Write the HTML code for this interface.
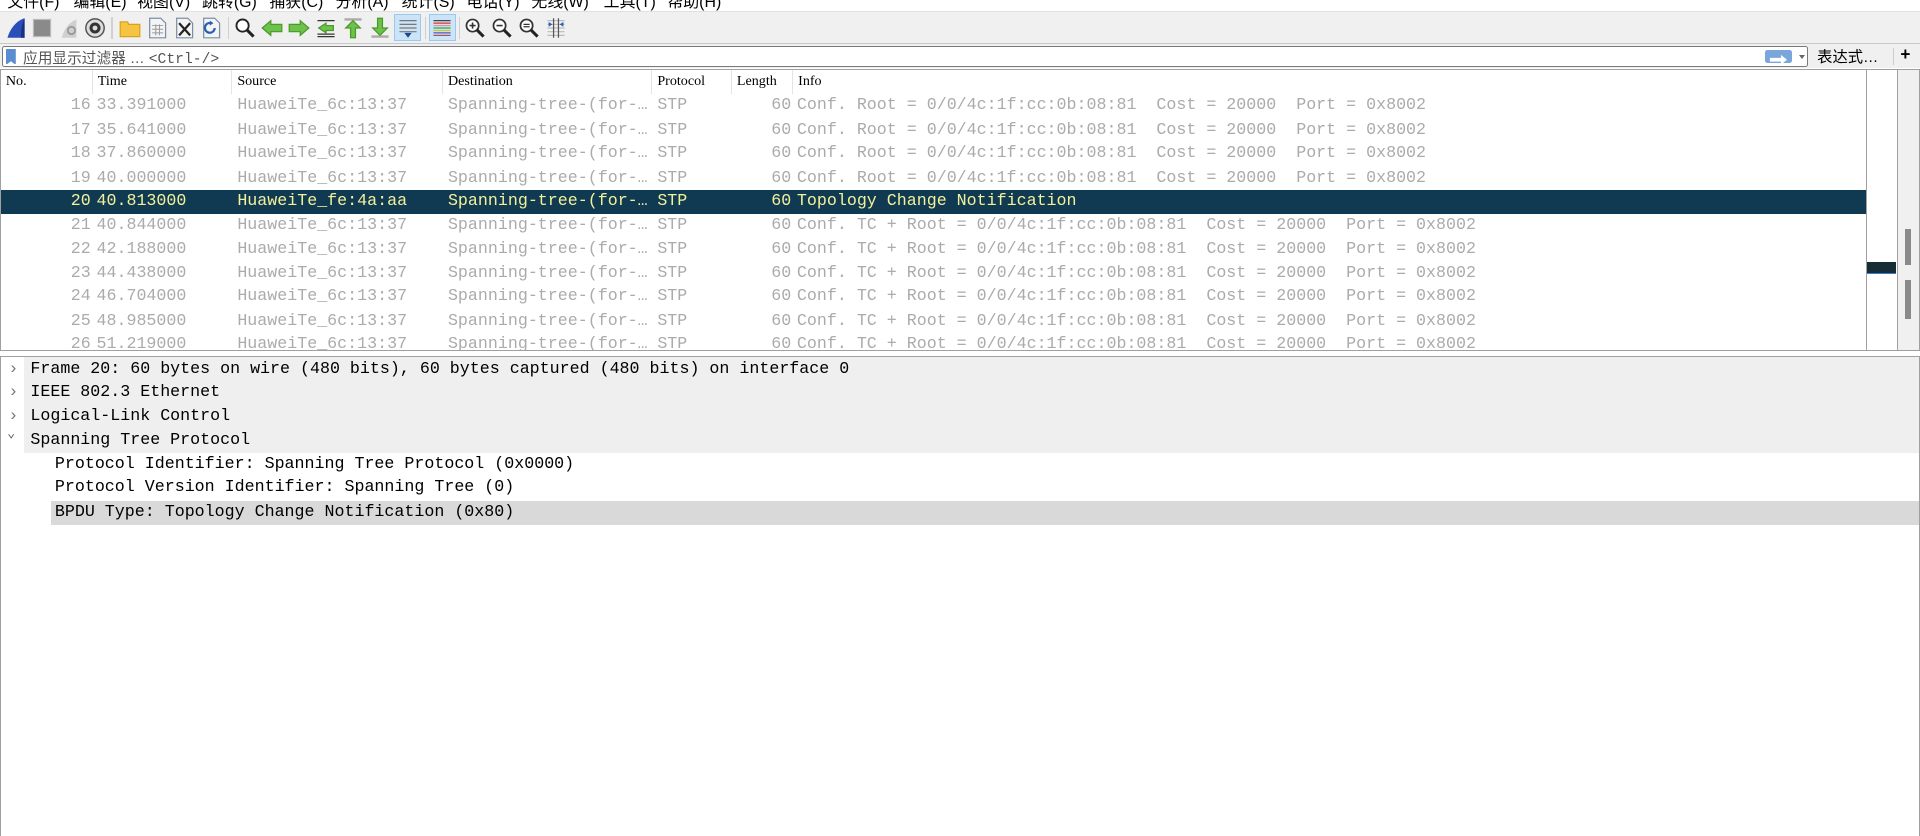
<!DOCTYPE html>
<html><head><meta charset="utf-8">
<style>
html,body{margin:0;padding:0;background:#fff;overflow:hidden;width:1920px;height:836px}
#w{position:relative;width:1568px;height:683px;zoom:1.22449;overflow:hidden;background:#fff;font-family:"Liberation Sans","Noto Sans CJK SC",sans-serif}
.abs{position:absolute}
.menu{top:-9px;left:0;height:18px;font-size:13px;color:#000;white-space:nowrap}
.menu span{position:absolute;top:0}
.tb{top:9px;left:0;width:1568px;height:26px;background:#f0f0f0;border-top:1px solid #e0e0e0}
.ic{position:absolute;top:4px;width:18px;height:18px}
.sep{position:absolute;top:4px;width:1px;height:18px;background:#d0d0d0}
.fb{top:35px;left:0;width:1568px;height:20px;background:#f0f0f0;border-top:1px solid #c8c8c8}
.inp{position:absolute;left:2px;top:2px;width:1473px;height:15px;background:#fff;border:1px solid #7a7a7a;border-radius:2px}
.mono{font-family:"Liberation Mono","DejaVu Sans Mono",monospace}
.pl{top:56px;left:0;width:1566px;height:229px;border:1px solid #a0a0a0;background:#fff;overflow:hidden}
.hdr{position:absolute;top:0;left:0;width:1523px;height:20px;font-size:11.5px;font-family:"Liberation Serif","DejaVu Serif",serif;color:#000}
.hdr span{position:absolute;top:3px}
.hdr i{position:absolute;top:0;width:1px;height:20px;background:#e4e4e4}
.row{position:absolute;left:0;width:1523px;height:20px;font-size:13.6px;color:#ababab;white-space:pre}
.row span{position:absolute;top:1px}
.sel{background:#0f3a52;color:#f4f19c}
.dp{top:291px;left:0;width:1566px;height:392px;border:1px solid #a0a0a0;border-bottom:none;background:#fff}
.dr{position:absolute;height:20px;font-size:13.6px;color:#000;white-space:pre}
.dr span{position:absolute;top:1px}
</style></head><body><div id="w">
<div class="abs menu">
<span style="left:6px">文件(F)</span><span style="left:60px">编辑(E)</span><span style="left:112px">视图(V)</span><span style="left:165px">跳转(G)</span><span style="left:220px">捕获(C)</span><span style="left:274px">分析(A)</span><span style="left:328px">统计(S)</span><span style="left:381px">电话(Y)</span><span style="left:434px">无线(W)</span><span style="left:493px">工具(T)</span><span style="left:545px">帮助(H)</span>
</div>
<div class="abs tb">
<svg class="ic" style="left:4px" viewBox="0 0 18 18"><path d="M2 17 C4 10 9 3 16 1 L16 17 Z" fill="#2a4fb8"/><path d="M16 1 L16 17 L13 17 C13 10 14 5 16 1Z" fill="#1a2f80"/></svg>
<svg class="ic" style="left:25px" viewBox="0 0 18 18"><rect x="2" y="2" width="14" height="14" fill="#8a8a8a" stroke="#bbb"/></svg>
<svg class="ic" style="left:47px" viewBox="0 0 18 18"><path d="M3 17 C5 10 9 4 15 2 L15 17 Z" fill="#cfcfcf"/><circle cx="11" cy="11" r="3" fill="none" stroke="#999" stroke-width="1.5"/></svg>
<svg class="ic" style="left:69px" viewBox="0 0 18 18"><circle cx="9" cy="9" r="7.5" fill="#ddd" stroke="#555" stroke-width="1.2"/><circle cx="9" cy="9" r="4.5" fill="#333"/><circle cx="9" cy="9" r="2" fill="#ddd"/></svg>
<div class="sep" style="left:91px"></div>
<svg class="ic" style="left:97px" viewBox="0 0 18 18"><path d="M1 4 H7 L8 6 H17 V16 H1Z" fill="#f6c440" stroke="#d9a21c"/></svg>
<svg class="ic" style="left:119px" viewBox="0 0 18 18"><path d="M3 1 H12 L16 5 V17 H3Z" fill="#f4f4f4" stroke="#7a8ea8"/><path d="M5 7H14M5 10H14M5 13H14M8 6V15M11 6V15" stroke="#999" stroke-width=".8"/></svg>
<svg class="ic" style="left:141px" viewBox="0 0 18 18"><path d="M3 1 H12 L16 5 V17 H3Z" fill="#f4f4f4" stroke="#7a8ea8"/><path d="M5 5 L14 15 M14 5 L5 15" stroke="#222" stroke-width="1.8"/></svg>
<svg class="ic" style="left:163px" viewBox="0 0 18 18"><path d="M3 1 H12 L16 5 V17 H3Z" fill="#f4f4f4" stroke="#7a8ea8"/><path d="M12 9 A4 4 0 1 1 9 5" fill="none" stroke="#2a5fb8" stroke-width="1.8"/><path d="M8 3 L11 5 L8 7Z" fill="#2a5fb8"/></svg>
<div class="sep" style="left:186px"></div>
<svg class="ic" style="left:191px" viewBox="0 0 18 18"><circle cx="7" cy="7" r="5" fill="#fff" stroke="#222" stroke-width="1.5"/><path d="M10.5 10.5 L16 16" stroke="#222" stroke-width="2.5"/></svg>
<svg class="ic" style="left:213px" viewBox="0 0 18 18"><path d="M1 9 L8 3 V6 H17 V12 H8 V15Z" fill="#6cc24a" stroke="#4a9a2a"/></svg>
<svg class="ic" style="left:235px" viewBox="0 0 18 18"><path d="M17 9 L10 3 V6 H1 V12 H10 V15Z" fill="#6cc24a" stroke="#4a9a2a"/></svg>
<svg class="ic" style="left:257px" viewBox="0 0 18 18"><path d="M2 3H16M2 14H16M2 16H16" stroke="#333"/><path d="M3 9 L9 5 V7 H15 V11 H9 V13Z" fill="#6cc24a" stroke="#4a9a2a"/></svg>
<svg class="ic" style="left:279px" viewBox="0 0 18 18"><path d="M2 2H16" stroke="#aaa" stroke-width="2"/><path d="M9 3 L15 9 H11 V17 H7 V9 H3Z" fill="#6cc24a" stroke="#4a9a2a"/></svg>
<svg class="ic" style="left:301px" viewBox="0 0 18 18"><path d="M2 16H16" stroke="#aaa" stroke-width="2"/><path d="M9 15 L15 9 H11 V1 H7 V9 H3Z" fill="#6cc24a" stroke="#4a9a2a"/></svg>
<div class="ic" style="left:322px;top:2px;width:22px;height:22px;background:#cce4f7;border:1px solid #99c9ef;box-sizing:border-box"></div>
<svg class="ic" style="left:324px" viewBox="0 0 18 18"><path d="M2 3H16M2 6H16M2 9H16M2 12H16" stroke="#777"/><path d="M6 13H12L9 17Z" fill="#1a4a8a"/></svg>
<div class="sep" style="left:347px"></div>
<div class="ic" style="left:350px;top:2px;width:22px;height:22px;background:#cce4f7;border:1px solid #99c9ef;box-sizing:border-box"></div>
<svg class="ic" style="left:352px" viewBox="0 0 18 18"><path d="M2 3H16" stroke="#444"/><path d="M2 5H16" stroke="#d33"/><path d="M2 7H16" stroke="#e89"/><path d="M2 9H16" stroke="#3a3"/><path d="M2 11H16" stroke="#c9c93a"/><path d="M2 13H16" stroke="#55c"/><path d="M2 15H16" stroke="#a55"/></svg>
<div class="sep" style="left:375px"></div>
<svg class="ic" style="left:379px" viewBox="0 0 18 18"><circle cx="7" cy="7" r="5" fill="#fff" stroke="#333" stroke-width="1.4"/><path d="M4.5 7H9.5M7 4.5V9.5" stroke="#333" stroke-width="1.3"/><path d="M10.5 10.5 L16 16" stroke="#222" stroke-width="2.5"/></svg>
<svg class="ic" style="left:401px" viewBox="0 0 18 18"><circle cx="7" cy="7" r="5" fill="#fff" stroke="#333" stroke-width="1.4"/><path d="M4.5 7H9.5" stroke="#333" stroke-width="1.3"/><path d="M10.5 10.5 L16 16" stroke="#222" stroke-width="2.5"/></svg>
<svg class="ic" style="left:423px" viewBox="0 0 18 18"><circle cx="7" cy="7" r="5" fill="#fff" stroke="#333" stroke-width="1.4"/><path d="M4.5 6H9.5M4.5 8H9.5" stroke="#333" stroke-width="1"/><path d="M10.5 10.5 L16 16" stroke="#222" stroke-width="2.5"/></svg>
<svg class="ic" style="left:445px" viewBox="0 0 18 18"><path d="M2 3H16M2 6H16M2 9H16M2 12H16M2 15H16" stroke="#bbb"/><path d="M7 1V17M11 1V17" stroke="#555"/><path d="M3 4L6 6L3 8ZM15 4L12 6L15 8Z" fill="#2a5fb8"/></svg>
</div>
<div class="abs fb">
<div class="inp">
<svg style="position:absolute;left:2px;top:1px" width="8" height="13" viewBox="0 0 8 13"><path d="M0 0H8V13L4 10L0 13Z" fill="#5a8ed0"/></svg>
<span style="position:absolute;left:16px;top:0px;font-size:12px;color:#555;white-space:nowrap">应用显示过滤器 … <span class="mono" style="position:static">&lt;Ctrl-/&gt;</span></span>
<div style="position:absolute;left:1439px;top:2px;width:22px;height:11px;background:#7aa6dc;border-radius:2px"><svg width="22" height="11" viewBox="0 0 22 11"><path d="M4 4H13V1.5L18 5.5L13 9.5V7H4Z" fill="#fff"/></svg></div>
<div style="position:absolute;left:1466px;top:6px;width:0;height:0;border-left:3px solid transparent;border-right:3px solid transparent;border-top:4px solid #666"></div>
</div>
<span style="position:absolute;left:1484px;top:1px;font-size:12.5px;white-space:nowrap">表达式…</span>
<div style="position:absolute;left:1546px;top:3px;width:1px;height:14px;background:#ccc"></div>
<span style="position:absolute;left:1552px;top:0px;font-size:14px;font-weight:bold">+</span>
</div>
<div class="abs pl">
<div class="hdr">
<span style="left:4px">No.</span><i style="left:74px"></i>
<span style="left:79px">Time</span><i style="left:188px"></i>
<span style="left:193px">Source</span><i style="left:360px"></i>
<span style="left:365px">Destination</span><i style="left:531px"></i>
<span style="left:536px">Protocol</span><i style="left:596px"></i>
<span style="left:601px">Length</span><i style="left:646px"></i>
<span style="left:651px">Info</span>
</div>
<div class="row mono" style="top:20px"><span style="left:57px">16</span><span style="left:78px">33.391000</span><span style="left:193px">HuaweiTe_6c:13:37</span><span style="left:365px">Spanning-tree-(for-…</span><span style="left:536px">STP</span><span style="left:629px">60</span><span style="left:650px">Conf. Root = 0/0/4c:1f:cc:0b:08:81  Cost = 20000  Port = 0x8002</span></div>
<div class="row mono" style="top:40px"><span style="left:57px">17</span><span style="left:78px">35.641000</span><span style="left:193px">HuaweiTe_6c:13:37</span><span style="left:365px">Spanning-tree-(for-…</span><span style="left:536px">STP</span><span style="left:629px">60</span><span style="left:650px">Conf. Root = 0/0/4c:1f:cc:0b:08:81  Cost = 20000  Port = 0x8002</span></div>
<div class="row mono" style="top:59px"><span style="left:57px">18</span><span style="left:78px">37.860000</span><span style="left:193px">HuaweiTe_6c:13:37</span><span style="left:365px">Spanning-tree-(for-…</span><span style="left:536px">STP</span><span style="left:629px">60</span><span style="left:650px">Conf. Root = 0/0/4c:1f:cc:0b:08:81  Cost = 20000  Port = 0x8002</span></div>
<div class="row mono" style="top:79px"><span style="left:57px">19</span><span style="left:78px">40.000000</span><span style="left:193px">HuaweiTe_6c:13:37</span><span style="left:365px">Spanning-tree-(for-…</span><span style="left:536px">STP</span><span style="left:629px">60</span><span style="left:650px">Conf. Root = 0/0/4c:1f:cc:0b:08:81  Cost = 20000  Port = 0x8002</span></div>
<div class="row mono sel" style="top:98px"><span style="left:57px">20</span><span style="left:78px">40.813000</span><span style="left:193px">HuaweiTe_fe:4a:aa</span><span style="left:365px">Spanning-tree-(for-…</span><span style="left:536px">STP</span><span style="left:629px">60</span><span style="left:650px">Topology Change Notification</span></div>
<div class="row mono" style="top:118px"><span style="left:57px">21</span><span style="left:78px">40.844000</span><span style="left:193px">HuaweiTe_6c:13:37</span><span style="left:365px">Spanning-tree-(for-…</span><span style="left:536px">STP</span><span style="left:629px">60</span><span style="left:650px">Conf. TC + Root = 0/0/4c:1f:cc:0b:08:81  Cost = 20000  Port = 0x8002</span></div>
<div class="row mono" style="top:137px"><span style="left:57px">22</span><span style="left:78px">42.188000</span><span style="left:193px">HuaweiTe_6c:13:37</span><span style="left:365px">Spanning-tree-(for-…</span><span style="left:536px">STP</span><span style="left:629px">60</span><span style="left:650px">Conf. TC + Root = 0/0/4c:1f:cc:0b:08:81  Cost = 20000  Port = 0x8002</span></div>
<div class="row mono" style="top:157px"><span style="left:57px">23</span><span style="left:78px">44.438000</span><span style="left:193px">HuaweiTe_6c:13:37</span><span style="left:365px">Spanning-tree-(for-…</span><span style="left:536px">STP</span><span style="left:629px">60</span><span style="left:650px">Conf. TC + Root = 0/0/4c:1f:cc:0b:08:81  Cost = 20000  Port = 0x8002</span></div>
<div class="row mono" style="top:176px"><span style="left:57px">24</span><span style="left:78px">46.704000</span><span style="left:193px">HuaweiTe_6c:13:37</span><span style="left:365px">Spanning-tree-(for-…</span><span style="left:536px">STP</span><span style="left:629px">60</span><span style="left:650px">Conf. TC + Root = 0/0/4c:1f:cc:0b:08:81  Cost = 20000  Port = 0x8002</span></div>
<div class="row mono" style="top:196px"><span style="left:57px">25</span><span style="left:78px">48.985000</span><span style="left:193px">HuaweiTe_6c:13:37</span><span style="left:365px">Spanning-tree-(for-…</span><span style="left:536px">STP</span><span style="left:629px">60</span><span style="left:650px">Conf. TC + Root = 0/0/4c:1f:cc:0b:08:81  Cost = 20000  Port = 0x8002</span></div>
<div class="row mono" style="top:215px"><span style="left:57px">26</span><span style="left:78px">51.219000</span><span style="left:193px">HuaweiTe_6c:13:37</span><span style="left:365px">Spanning-tree-(for-…</span><span style="left:536px">STP</span><span style="left:629px">60</span><span style="left:650px">Conf. TC + Root = 0/0/4c:1f:cc:0b:08:81  Cost = 20000  Port = 0x8002</span></div>
<div style="position:absolute;left:1523px;top:0;width:1px;height:229px;background:#a0a0a0"></div>
<div style="position:absolute;left:1524px;top:157px;width:24px;height:9px;background:#172d36;border-bottom:1px solid #3a7ac8"></div>
<div style="position:absolute;left:1548px;top:0;width:1px;height:229px;background:#a0a0a0"></div>
<div style="position:absolute;left:1549px;top:0;width:17px;height:229px;background:#f0f0f0"></div>
<div style="position:absolute;left:1555px;top:130px;width:5px;height:30px;background:#8a8a8a"></div>
<div style="position:absolute;left:1555px;top:172px;width:5px;height:32px;background:#8a8a8a"></div>
</div>
<div class="abs dp mono">
<div class="dr" style="top:0;left:0;width:1566px"><div style="position:absolute;left:19px;top:0;width:1547px;height:20px;background:#efefef"></div><span style="left:6px;color:#777">›</span><span style="left:24px">Frame 20: 60 bytes on wire (480 bits), 60 bytes captured (480 bits) on interface 0</span></div>
<div class="dr" style="top:19px;left:0;width:1566px"><div style="position:absolute;left:19px;top:0;width:1547px;height:20px;background:#efefef"></div><span style="left:6px;color:#777">›</span><span style="left:24px">IEEE 802.3 Ethernet</span></div>
<div class="dr" style="top:39px;left:0;width:1566px"><div style="position:absolute;left:19px;top:0;width:1547px;height:20px;background:#efefef"></div><span style="left:6px;color:#777">›</span><span style="left:24px">Logical-Link Control</span></div>
<div class="dr" style="top:58px;left:0;width:1566px"><div style="position:absolute;left:19px;top:0;width:1547px;height:20px;background:#efefef"></div><span style="left:5px;color:#555;font-size:11px;top:-2px">⌄</span><span style="left:24px">Spanning Tree Protocol</span></div>
<div class="dr" style="top:78px;left:0;width:1566px"><span style="left:44px">Protocol Identifier: Spanning Tree Protocol (0x0000)</span></div>
<div class="dr" style="top:97px;left:0;width:1566px"><span style="left:44px">Protocol Version Identifier: Spanning Tree (0)</span></div>
<div class="dr" style="top:117px;left:0;width:1566px"><div style="position:absolute;left:41px;top:0;width:1525px;height:20px;background:#d9d9d9"></div><span style="left:44px">BPDU Type: Topology Change Notification (0x80)</span></div>
</div>
</div></body></html>
